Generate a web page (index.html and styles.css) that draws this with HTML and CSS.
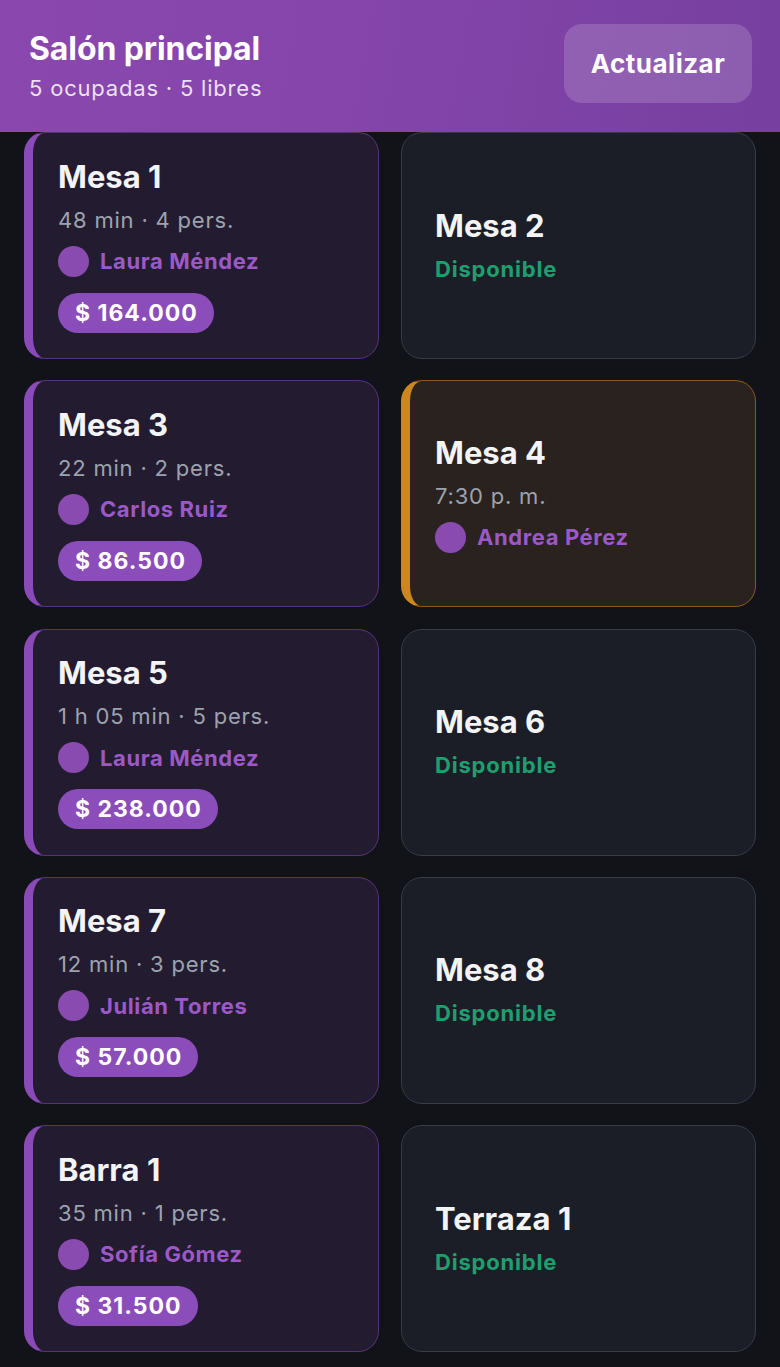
FILE: index.html
```html
<!DOCTYPE html>
<html lang="es">
<head>
<meta charset="utf-8">
<title>Salón principal</title>
<link rel="stylesheet" href="styles.css">
</head>
<body>
<header class="topbar">
  <div class="topbar-text">
    <h1 class="topbar-title">Salón principal</h1>
    <p class="topbar-sub">5 ocupadas · 5 libres</p>
  </div>
  <button class="refresh-btn">Actualizar</button>
</header>
<main class="grid">
  <section class="card card-busy">
    <h2 class="card-title">Mesa 1</h2>
    <p class="card-meta">48 min · 4 pers.</p>
    <div class="waiter"><span class="avatar"></span><span class="waiter-name">Laura Méndez</span></div>
    <span class="amount">$ 164.000</span>
  </section>
  <section class="card card-free">
    <h2 class="card-title">Mesa 2</h2>
    <p class="card-status">Disponible</p>
  </section>
  <section class="card card-busy">
    <h2 class="card-title">Mesa 3</h2>
    <p class="card-meta">22 min · 2 pers.</p>
    <div class="waiter"><span class="avatar"></span><span class="waiter-name">Carlos Ruiz</span></div>
    <span class="amount">$ 86.500</span>
  </section>
  <section class="card card-reserved">
    <h2 class="card-title">Mesa 4</h2>
    <p class="card-meta">7:30 p. m.</p>
    <div class="waiter"><span class="avatar"></span><span class="waiter-name">Andrea Pérez</span></div>
  </section>
  <section class="card card-busy">
    <h2 class="card-title">Mesa 5</h2>
    <p class="card-meta">1 h 05 min · 5 pers.</p>
    <div class="waiter"><span class="avatar"></span><span class="waiter-name">Laura Méndez</span></div>
    <span class="amount">$ 238.000</span>
  </section>
  <section class="card card-free">
    <h2 class="card-title">Mesa 6</h2>
    <p class="card-status">Disponible</p>
  </section>
  <section class="card card-busy">
    <h2 class="card-title">Mesa 7</h2>
    <p class="card-meta">12 min · 3 pers.</p>
    <div class="waiter"><span class="avatar"></span><span class="waiter-name">Julián Torres</span></div>
    <span class="amount">$ 57.000</span>
  </section>
  <section class="card card-free">
    <h2 class="card-title">Mesa 8</h2>
    <p class="card-status">Disponible</p>
  </section>
  <section class="card card-busy">
    <h2 class="card-title">Barra 1</h2>
    <p class="card-meta">35 min · 1 pers.</p>
    <div class="waiter"><span class="avatar"></span><span class="waiter-name">Sofía Gómez</span></div>
    <span class="amount">$ 31.500</span>
  </section>
  <section class="card card-free">
    <h2 class="card-title">Terraza 1</h2>
    <p class="card-status">Disponible</p>
  </section>
</main>
</body>
</html>
```
FILE: styles.css
```css
* { box-sizing: border-box; }
html, body { margin: 0; padding: 0; }
body {
  background: #111318;
  font-family: Inter, "Noto Sans", "Liberation Sans", sans-serif;
  color: #f3f4f6;
  width: 780px;
  height: 1367px;
  overflow: hidden;
}
.topbar {
  height: 132px;
  padding: 0 28px 0 29px;
  display: flex;
  align-items: center;
  justify-content: space-between;
  background: linear-gradient(100deg, #8a48ae 0%, #8545aa 45%, #763fa0 100%);
}
.topbar-text { display: flex; flex-direction: column; }
.topbar-title {
  margin: 0;
  font-size: 32px;
  line-height: 38px;
  font-weight: 700;
  letter-spacing: -0.1px;
  color: #ffffff;
}
.topbar-sub {
  margin: 6px 0 0;
  font-size: 22px;
  line-height: 28px;
  letter-spacing: 0.8px;
  color: rgba(255,255,255,0.85);
}
.refresh-btn {
  width: 188px;
  height: 79px;
  margin-top: -5px;
  border: none;
  border-radius: 18px;
  background: rgba(255,255,255,0.16);
  color: #ffffff;
  font-family: inherit;
  font-size: 26px;
  font-weight: 700;
  letter-spacing: 0.5px;
}
.grid {
  display: grid;
  grid-template-columns: 355px 355px;
  column-gap: 22px;
  row-gap: 21.25px;
  padding: 0 24px;
}
.card {
  height: 227px;
  border-radius: 21px;
  border: 1.5px solid #363b47;
  background: #1b1e26;
  display: flex;
  flex-direction: column;
  justify-content: center;
  align-items: flex-start;
  padding: 0 20px 0 33px;
}
.card-busy {
  background: #231b30;
  border-color: #553378;
  border-left: 9px solid #8a4bb8;
  padding-left: 25px;
}
.card-reserved {
  background: #29221e;
  border-color: #86591f;
  border-left: 9px solid #cc871f;
  padding-left: 25px;
}
.card-title {
  margin: 0 0 10px;
  font-size: 31px;
  line-height: 36px;
  font-weight: 700;
  color: #f3f4f6;
}
.card-meta {
  margin: 0;
  font-size: 22px;
  line-height: 30px;
  letter-spacing: 0.8px;
  color: #9ca3af;
}
.card-status {
  margin: 0;
  font-size: 22px;
  line-height: 30px;
  font-weight: 700;
  letter-spacing: 0.8px;
  color: #1f9e6e;
}
.waiter {
  margin-top: 11px;
  display: flex;
  align-items: center;
  gap: 11px;
  height: 31px;
}
.avatar {
  width: 31px;
  height: 31px;
  border-radius: 50%;
  background: #8a4bb0;
}
.waiter-name {
  font-size: 22px;
  font-weight: 700;
  letter-spacing: 0.6px;
  color: #9b59c8;
}
.amount {
  margin-top: 16px;
  height: 40px;
  padding: 0 16px 0 17px;
  border-radius: 20px;
  background: #8b4dba;
  color: #ffffff;
  font-size: 23px;
  font-weight: 700;
  letter-spacing: 1px;
  line-height: 40px;
}
```
